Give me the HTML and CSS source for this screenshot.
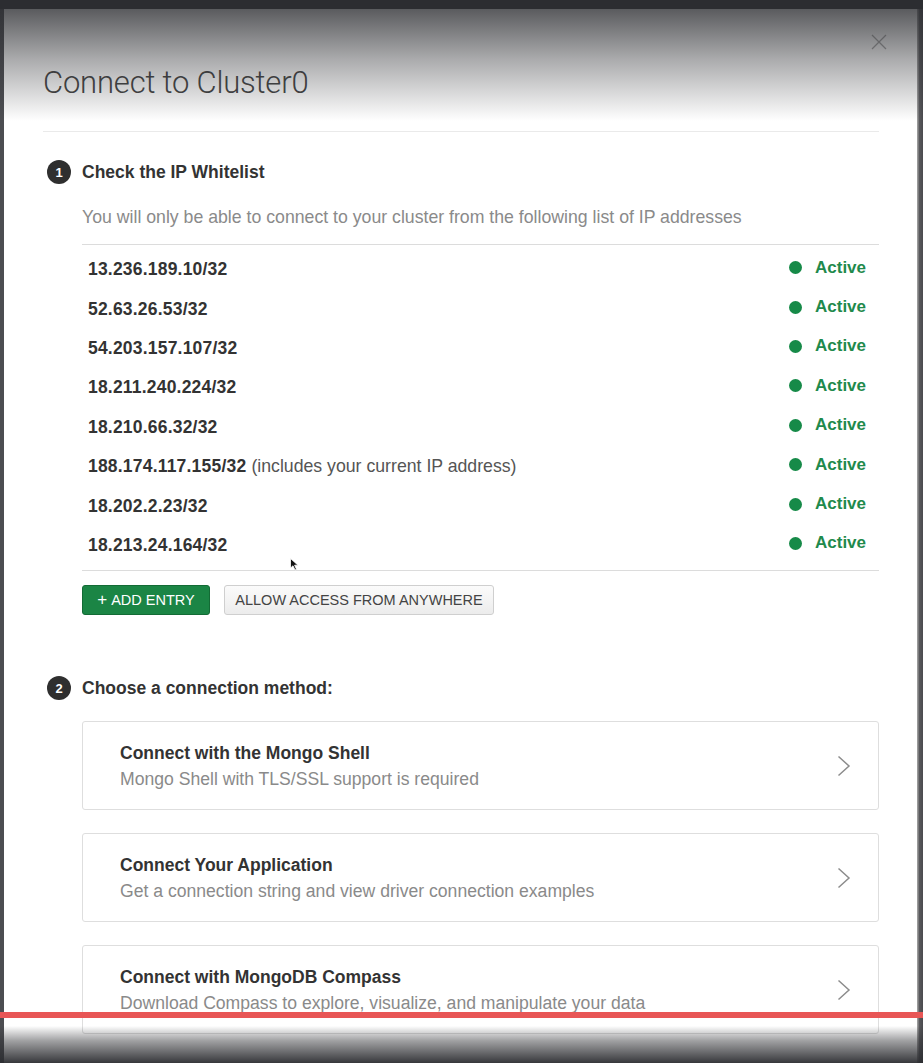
FILE: index.html
```html
<!DOCTYPE html>
<html>
<head>
<meta charset="utf-8">
<link rel="stylesheet" href="styles.css">
</head>
<body>
<div class="screen">
  <div class="edge-left"></div>
  <div class="modal">
    <button class="close" aria-label="close">
      <svg width="16" height="16" viewBox="0 0 16 16"><path d="M1 1 L15 15 M15 1 L1 15" stroke="#a8a8a8" stroke-width="1.3" fill="none"/></svg>
    </button>
    <h1 class="title">Connect to Cluster0</h1>
    <div class="rule"></div>

    <div class="step">
      <span class="num">1</span>
      <span class="step-title">Check the IP Whitelist</span>
    </div>
    <div class="section">
      <p class="desc">You will only be able to connect to your cluster from the following list of IP addresses</p>
      <ul class="ips">
        <li class="ip"><span class="addr">13.236.189.10/32</span><span class="status"><i class="dot"></i>Active</span></li>
        <li class="ip"><span class="addr">52.63.26.53/32</span><span class="status"><i class="dot"></i>Active</span></li>
        <li class="ip"><span class="addr">54.203.157.107/32</span><span class="status"><i class="dot"></i>Active</span></li>
        <li class="ip"><span class="addr">18.211.240.224/32</span><span class="status"><i class="dot"></i>Active</span></li>
        <li class="ip"><span class="addr">18.210.66.32/32</span><span class="status"><i class="dot"></i>Active</span></li>
        <li class="ip"><span class="addr">188.174.117.155/32 <span class="note">(includes your current IP address)</span></span><span class="status"><i class="dot"></i>Active</span></li>
        <li class="ip"><span class="addr">18.202.2.23/32</span><span class="status"><i class="dot"></i>Active</span></li>
        <li class="ip"><span class="addr">18.213.24.164/32</span><span class="status"><i class="dot"></i>Active</span></li>
      </ul>
      <div class="buttons">
        <button class="btn btn-green"><span class="plus">+</span> ADD ENTRY</button>
        <button class="btn btn-gray">ALLOW ACCESS FROM ANYWHERE</button>
      </div>
    </div>

    <div class="step step2">
      <span class="num">2</span>
      <span class="step-title">Choose a connection method:</span>
    </div>
    <div class="section cards">
      <div class="card">
        <div class="card-text">
          <div class="card-title">Connect with the Mongo Shell</div>
          <div class="card-sub">Mongo Shell with TLS/SSL support is required</div>
        </div>
        <svg class="chev" width="14" height="22" viewBox="0 0 14 22"><path d="M1.5 1.5 L12 11 L1.5 20.5" stroke="#8c8c8c" stroke-width="1.5" fill="none"/></svg>
      </div>
      <div class="card">
        <div class="card-text">
          <div class="card-title">Connect Your Application</div>
          <div class="card-sub">Get a connection string and view driver connection examples</div>
        </div>
        <svg class="chev" width="14" height="22" viewBox="0 0 14 22"><path d="M1.5 1.5 L12 11 L1.5 20.5" stroke="#8c8c8c" stroke-width="1.5" fill="none"/></svg>
      </div>
      <div class="card">
        <div class="card-text">
          <div class="card-title">Connect with MongoDB Compass</div>
          <div class="card-sub">Download Compass to explore, visualize, and manipulate your data</div>
        </div>
        <svg class="chev" width="14" height="22" viewBox="0 0 14 22"><path d="M1.5 1.5 L12 11 L1.5 20.5" stroke="#8c8c8c" stroke-width="1.5" fill="none"/></svg>
      </div>
    </div>
  </div>
  <div class="edge-right"></div>

  <svg class="cursor" width="9" height="13" viewBox="0 0 9 13"><path d="M0.5 0.5 L0.5 10 L3 7.8 L5 12 L6.5 11.3 L4.6 7.2 L8 7.2 Z" fill="#111" stroke="#fff" stroke-width="0.8"/></svg>
  <div class="shade-top"></div>
  <div class="shade-bottom"></div>
  <div class="red-line"></div>
</div>
</body>
</html>
```

FILE: styles.css
```css
html, body {
  margin: 0;
  padding: 0;
  background: #2c2d31;
  overflow: hidden;
}

.screen {
  position: relative;
  width: 923px;
  height: 1063px;
  display: flex;
  align-items: flex-start;
  padding-top: 9px;
  box-sizing: border-box;
  font-family: "Liberation Sans", Arial, sans-serif;
  color: #333;
}

.edge-left {
  width: 4px;
  align-self: stretch;
  background: #4c4d51;
}

.edge-right {
  width: 6px;
  align-self: stretch;
  background: linear-gradient(to right, #9a9a9a 0, #9a9a9a 1px, #5a5a5d 2px, #4a4a4e 100%);
}

.modal {
  position: relative;
  width: 913px;
  height: 1100px;
  background: #fff;
  box-sizing: border-box;
  padding: 57px 38px 0 39px;
}

.close {
  position: absolute;
  top: 25px;
  right: 30px;
  width: 16px;
  height: 16px;
  padding: 0;
  border: 0;
  background: none;
  display: flex;
}

.title {
  margin: 0;
  font-family: Roboto, "Liberation Sans", sans-serif;
  font-weight: 300;
  font-size: 31px;
  line-height: 34px;
  color: #444;
  letter-spacing: -0.2px;
}

.rule {
  height: 1px;
  background: #eaeaea;
  margin-top: 31px;
}

.step {
  display: flex;
  align-items: center;
  gap: 11px;
  margin: 28px 0 0 4px;
  height: 24px;
}

.num {
  width: 24px;
  height: 24px;
  border-radius: 50%;
  background: #2f2f2f;
  color: #fff;
  font-weight: 700;
  font-size: 13px;
  display: flex;
  align-items: center;
  justify-content: center;
}

.step-title {
  font-weight: 700;
  font-size: 17.5px;
  color: #333;
}

.section {
  margin-left: 39px;
}

.desc {
  margin: 23px 0 0;
  font-size: 17.7px;
  line-height: 20px;
  color: #8a8a8a;
}

.ips {
  list-style: none;
  margin: 17px 0 0;
  padding: 5px 0;
  border-top: 1px solid #dcdcdc;
  border-bottom: 1px solid #dcdcdc;
}

.ip {
  height: 39.4px;
  display: flex;
  align-items: center;
  justify-content: space-between;
  padding-left: 6px;
}

.addr {
  font-weight: 700;
  font-size: 17.5px;
  letter-spacing: 0.2px;
  color: #333;
}

.note {
  font-weight: 400;
  font-size: 17.7px;
  letter-spacing: 0;
  color: #555;
}

.status {
  display: flex;
  align-items: center;
  gap: 13px;
  width: 90px;
  margin-bottom: 4px;
  font-weight: 700;
  font-size: 17px;
  color: #1f8a4c;
}

.dot {
  width: 13px;
  height: 13px;
  border-radius: 50%;
  background: #168a48;
}

.buttons {
  display: flex;
  gap: 14px;
  margin-top: 14px;
}

.btn {
  height: 30px;
  border-radius: 3px;
  font-family: "Liberation Sans", Arial, sans-serif;
  font-size: 14.5px;
  padding: 0 10px;
  display: flex;
  align-items: center;
}

.btn-green {
  width: 128px;
  justify-content: center;
  background: #1b8545;
  border: 1px solid #136b35;
  color: #fff;
}

.plus {
  font-size: 17px;
  margin-right: 4px;
}

.btn-gray {
  width: 270px;
  justify-content: center;
  background: linear-gradient(#fbfbfb, #ececec);
  border: 1px solid #cfcfcf;
  color: #444;
}

.step2 {
  margin-top: 61px;
}

.cards {
  display: flex;
  flex-direction: column;
  gap: 23px;
  margin-top: 21px;
}

.card {
  height: 89px;
  box-sizing: border-box;
  border: 1px solid #dedede;
  border-radius: 3px;
  display: flex;
  align-items: center;
  justify-content: space-between;
  padding: 0 27px 0 37px;
}

.card-title {
  font-weight: 700;
  font-size: 17.5px;
  line-height: 22px;
  color: #333;
}

.card-sub {
  margin-top: 4px;
  font-size: 17.6px;
  line-height: 22px;
  color: #8a8a8a;
}

.cursor {
  position: absolute;
  left: 290px;
  top: 558px;
}

.shade-top {
  position: absolute;
  left: 0;
  top: 9px;
  width: 100%;
  height: 112px;
  background: linear-gradient(rgba(44,45,49,0.78), rgba(44,45,49,0.4) 45%, rgba(44,45,49,0) 100%);
  pointer-events: none;
}

.shade-bottom {
  position: absolute;
  left: 0;
  top: 1026px;
  width: 100%;
  height: 37px;
  background: linear-gradient(rgba(44,45,49,0), rgba(44,45,49,0.45) 40%, rgba(44,45,49,0.95));
  pointer-events: none;
}

.red-line {
  position: absolute;
  left: 0;
  top: 1012px;
  width: 100%;
  height: 6px;
  background: #e85656;
}
```
